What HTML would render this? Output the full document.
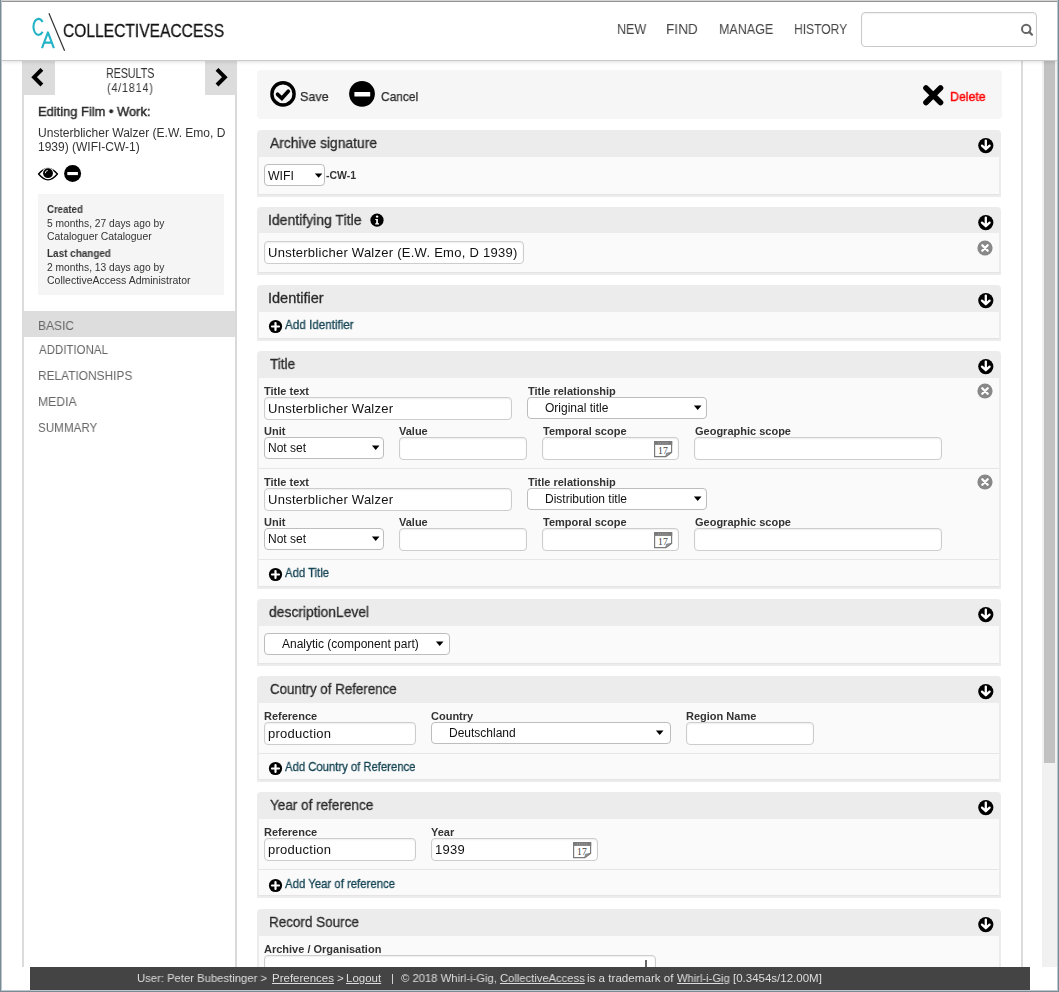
<!DOCTYPE html>
<html><head><meta charset="utf-8">
<style>
*{box-sizing:border-box}
html,body{margin:0;padding:0;width:1059px;height:992px;overflow:hidden;background:#fff;font-family:"Liberation Sans",sans-serif}
.a{position:absolute}
.t{position:absolute;white-space:nowrap;line-height:1;transform-origin:0 0;will-change:transform}
.sec{position:absolute;left:257px;width:744px;background:#ececec;border-radius:4px 4px 0 0}
.sec .bd{position:absolute;left:2px;right:2px;background:#fafafa;border-bottom:1px solid #e4e4e4}
.sh{font-size:14.5px;color:#333;transform:scaleX(.955)}
.st{-webkit-text-stroke:.25px currentColor}
.inp{position:absolute;background:#fff;border:1px solid #cdcdcd;border-radius:4px;box-shadow:inset 0 1px 2px rgba(0,0,0,.07)}
.sel{position:absolute;background:#fff;border:1px solid #bdbdbd;border-radius:4px}
.lbl{position:absolute;font-size:11px;font-weight:bold;color:#333;white-space:nowrap;line-height:1;will-change:transform}
.itx{position:absolute;font-size:13px;color:#111;white-space:nowrap;line-height:1;letter-spacing:.26px;will-change:transform}
.stx{position:absolute;font-size:12px;color:#111;white-space:nowrap;line-height:1;will-change:transform}
.arr{position:absolute;width:0;height:0;border-left:3.5px solid transparent;border-right:3.5px solid transparent;border-top:4.5px solid #000}
.add{position:absolute;font-size:12.6px;color:#21505f;white-space:nowrap;line-height:1;transform-origin:0 0}
.ft{position:absolute;white-space:nowrap;line-height:1;font-size:11.5px;color:#ddd;z-index:9;transform-origin:0 0;will-change:transform}
</style></head><body>
<div class="a" style="left:2px;top:2px;width:1055px;height:58px;background:#fff;z-index:5;box-shadow:0 1px 0 #cbcbcb,0 2px 4px rgba(0,0,0,.13)"></div>
<svg class="a" style="left:0;top:0;z-index:6" width="240" height="60">
 <path d="M42.6 22.0 A5.1 8.0 0 1 0 42.6 31.7" fill="none" stroke="#22b3c7" stroke-width="2.1"/>
 <path d="M42 48.1 L47.95 32.4 L53.9 48.1 M43.9 42.6 L52 42.6" fill="none" stroke="#22b3c7" stroke-width="2.1" stroke-linejoin="round"/>
 <path d="M48.9 13.3 L64.6 50.7" stroke="#333" stroke-width="1.2"/>
</svg>
<div class="t" style="left:62.7px;top:22px;font-size:18.5px;color:#111;transform:scaleX(0.8426);z-index:6;-webkit-text-stroke:.3px #111">COLLECTIVEACCESS</div>
<div class="t" style="left:616.51px;top:22px;font-size:14.5px;color:#444;transform:scaleX(0.8604);z-index:6">NEW</div>
<div class="t" style="left:666.01px;top:22px;font-size:14.5px;color:#444;transform:scaleX(0.9404);z-index:6">FIND</div>
<div class="t" style="left:719.01px;top:22px;font-size:14.5px;color:#444;transform:scaleX(0.8621);z-index:6">MANAGE</div>
<div class="t" style="left:794.2px;top:22px;font-size:14.5px;color:#444;transform:scaleX(0.8322);z-index:6">HISTORY</div>
<div class="a" style="left:861px;top:12px;width:176px;height:35px;border:1px solid #c9c9c9;border-radius:4px;background:#fff;z-index:6;box-shadow:inset 0 1px 2px rgba(0,0,0,.06)"></div>
<svg class="a" style="left:1018px;top:22px;z-index:7" width="16" height="16">
 <circle cx="8.2" cy="6.9" r="4.2" fill="none" stroke="#666" stroke-width="2"/>
 <path d="M11.2 9.9 L14 12.7" stroke="#666" stroke-width="2.2" stroke-linecap="round"/>
</svg>
<div class="a" style="left:1042px;top:60px;width:15px;height:907px;background:#f1f1f1"></div>
<div class="a" style="left:1044px;top:60px;width:11px;height:703px;background:#c1c1c1"></div>
<div class="a" style="left:22px;top:60px;width:2px;height:907px;background:#dcdcdc"></div>
<div class="a" style="left:235px;top:60px;width:2px;height:907px;background:#d9d9d9"></div>
<div class="a" style="left:1021px;top:60px;width:2px;height:907px;background:#dcdcdc"></div>
<div class="a" style="left:22px;top:60px;width:33px;height:35px;background:#dcdcdc"></div>
<svg class="a" style="left:22px;top:60px" width="33" height="35"><path d="M19.9 9.4 L12.1 17.2 L19.9 25" fill="none" stroke="#000" stroke-width="4"/></svg>
<div class="a" style="left:205px;top:60px;width:32px;height:35px;background:#dcdcdc"></div>
<svg class="a" style="left:205px;top:60px" width="32" height="35"><path d="M12 9.4 L19.8 17.2 L12 25" fill="none" stroke="#000" stroke-width="4"/></svg>
<div class="t" style="left:105.88px;top:66.5px;font-size:13.8px;color:#333;transform:scaleX(0.771);">RESULTS</div>
<div class="t" style="left:107.37px;top:82px;font-size:12.5px;color:#333;transform:scaleX(0.855);letter-spacing:1px">(4/1814)</div>
<div class="t" style="left:38.0px;top:104.8px;font-size:13.5px;color:#2a2a2a;transform:scaleX(0.955);-webkit-text-stroke:.45px #2a2a2a">Editing Film • Work:</div>
<div class="t" style="left:37.5px;top:126.5px;font-size:12px;color:#333;transform:scaleX(1.0027);">Unsterblicher Walzer (E.W. Emo, D</div>
<div class="t" style="left:37.5px;top:140.5px;font-size:12px;color:#333;transform:scaleX(1.0);">1939) (WIFI-CW-1)</div>
<svg class="a" style="left:36px;top:163px" width="50" height="22">
 <path d="M2.6 11.1 Q12 0.1 21.4 11.1 Q12 22.4 2.6 11.1 Z" fill="none" stroke="#000" stroke-width="1.5" stroke-linejoin="round"/>
 <circle cx="12" cy="10.4" r="5.9" fill="#fff"/>
 <circle cx="12" cy="10.2" r="4.9" fill="#000"/>
 <path d="M9.3 10.2 A2.7 2.7 0 0 1 11.8 7.5" fill="none" stroke="#fff" stroke-width="0.9"/>
 <circle cx="36.6" cy="10.5" r="8.5" fill="#000"/>
 <rect x="31.3" y="9" width="10.6" height="3.1" fill="#fff"/>
</svg>
<div class="a" style="left:38px;top:194px;width:186px;height:101px;background:#f5f5f5"></div>
<div class="t" style="left:46.99px;top:205.3px;font-size:10px;color:#333;transform:scaleX(0.9603);font-weight:bold">Created</div>
<div class="t" style="left:47.0px;top:218.6px;font-size:10px;color:#333;transform:scaleX(1.0244);">5 months, 27 days ago by</div>
<div class="t" style="left:47.0px;top:231.6px;font-size:10px;color:#333;transform:scaleX(1.04);">Cataloguer Cataloguer</div>
<div class="t" style="left:47.0px;top:249.3px;font-size:10px;color:#333;transform:scaleX(0.9911);font-weight:bold">Last changed</div>
<div class="t" style="left:47.0px;top:262.6px;font-size:10px;color:#333;transform:scaleX(1.0244);">2 months, 13 days ago by</div>
<div class="t" style="left:47.0px;top:275.6px;font-size:10px;color:#333;transform:scaleX(1.05);">CollectiveAccess Administrator</div>
<div class="a" style="left:24px;top:311px;width:211px;height:26px;background:#dddddd"></div>
<div class="t" style="left:37.91px;top:319px;font-size:13px;color:#666;transform:scaleX(0.9244);">BASIC</div>
<div class="t" style="left:39.01px;top:343.3px;font-size:13px;color:#666;transform:scaleX(0.8837);">ADDITIONAL</div>
<div class="t" style="left:37.98px;top:369px;font-size:13px;color:#666;transform:scaleX(0.9149);">RELATIONSHIPS</div>
<div class="t" style="left:37.94px;top:395px;font-size:13px;color:#666;transform:scaleX(0.9378);">MEDIA</div>
<div class="t" style="left:37.97px;top:420.8px;font-size:13px;color:#666;transform:scaleX(0.8954);">SUMMARY</div>
<div class="a" style="left:257px;top:70px;width:745px;height:49px;background:#f6f6f6;border-radius:4px"></div>
<svg class="a" style="left:268px;top:79px" width="120" height="30"><circle cx="15" cy="14.9" r="11.1" fill="none" stroke="#000" stroke-width="3.4"/><path d="M9.6 15.3 L13.9 19.3 L20.3 12.3" fill="none" stroke="#000" stroke-width="3.7" stroke-linecap="round" stroke-linejoin="miter"/><circle cx="94" cy="14.85" r="12.9" fill="#000"/><rect x="86.4" y="13.1" width="15.8" height="4.5" fill="#fff" rx="0.5"/></svg>
<div class="t" style="left:299.96px;top:89.5px;font-size:13px;color:#2a2a2a;transform:scaleX(0.9633);-webkit-text-stroke:.25px #2a2a2a">Save</div>
<div class="t" style="left:380.53px;top:89.5px;font-size:13px;color:#2a2a2a;transform:scaleX(0.9205);-webkit-text-stroke:.25px #2a2a2a">Cancel</div>
<svg class="a" style="left:920px;top:82px" width="27" height="27"><path d="M6 6 L20.5 20.5 M20.5 6 L6 20.5" stroke="#000" stroke-width="5.6" stroke-linecap="round"/></svg>
<div class="t" style="left:950.3px;top:89.5px;font-size:13px;color:#ff0000;transform:scaleX(0.95);-webkit-text-stroke:.4px #ff0000">Delete</div>
<div class="sec" style="top:130px;height:67px"><div class="bd" style="top:27px;bottom:2px"></div></div>
<div class="t" style="left:269.5px;top:135.5px;font-size:14.5px;color:#2a2a2a;transform:scaleX(0.955);-webkit-text-stroke:.3px #2a2a2a">Archive signature</div>
<svg class="a" style="left:977px;top:137px" width="18" height="18"><circle cx="8.8" cy="8.6" r="7.6" fill="#000"/><path d="M8.8 3.6 V11.5 M5 8.6 L8.8 12.2 L12.6 8.6" fill="none" stroke="#fff" stroke-width="2.3" stroke-linecap="round" stroke-linejoin="round"/></svg>
<div class="sel" style="left:264px;top:164px;width:61px;height:22px"></div>
<div class="stx" style="left:268px;top:169.8px;font-size:12.3px">WIFI</div>
<svg class="a" style="left:314px;top:172.5px" width="10" height="7"><path d="M0.9 0.6 H8.3 L4.6 4.8 Z" fill="#000"/></svg>
<div class="t" style="left:325.8px;top:170px;font-size:10.5px;color:#333;transform:scaleX(1);font-weight:bold">-CW-1</div>
<div class="sec" style="top:207px;height:68px"><div class="bd" style="top:26px;bottom:2px"></div></div>
<div class="t" style="left:268.48px;top:212.5px;font-size:14.5px;color:#2a2a2a;transform:scaleX(0.9656);-webkit-text-stroke:.3px #2a2a2a">Identifying Title</div>
<svg class="a" style="left:977px;top:214px" width="18" height="18"><circle cx="8.8" cy="8.6" r="7.6" fill="#000"/><path d="M8.8 3.6 V11.5 M5 8.6 L8.8 12.2 L12.6 8.6" fill="none" stroke="#fff" stroke-width="2.3" stroke-linecap="round" stroke-linejoin="round"/></svg>
<svg class="a" style="left:370px;top:213px" width="14" height="14"><circle cx="7" cy="7.2" r="6.6" fill="#000"/><circle cx="7.1" cy="3.6" r="1.2" fill="#fff"/><path d="M5.3 6 H7.9 V10.3 H9 V11.4 H5.2 V10.3 H6.2 V7 H5.3 Z" fill="#fff"/></svg>
<div class="inp" style="left:264px;top:241px;width:260px;height:23px"></div>
<div class="itx" style="left:268px;top:246px">Unsterblicher Walzer (E.W. Emo, D 1939)</div>
<svg class="a" style="left:977px;top:240px" width="16" height="16"><circle cx="8" cy="8" r="7.6" fill="#888"/><path d="M5.3 5.3 L10.7 10.7 M10.7 5.3 L5.3 10.7" stroke="#fff" stroke-width="2.3" stroke-linecap="round"/></svg>
<div class="sec" style="top:285px;height:56px"><div class="bd" style="top:27px;bottom:2px"></div></div>
<div class="t" style="left:268.45px;top:290.5px;font-size:14.5px;color:#2a2a2a;transform:scaleX(1.001);-webkit-text-stroke:.3px #2a2a2a">Identifier</div>
<svg class="a" style="left:977px;top:292px" width="18" height="18"><circle cx="8.8" cy="8.6" r="7.6" fill="#000"/><path d="M8.8 3.6 V11.5 M5 8.6 L8.8 12.2 L12.6 8.6" fill="none" stroke="#fff" stroke-width="2.3" stroke-linecap="round" stroke-linejoin="round"/></svg>
<svg class="a" style="left:268px;top:319.4px" width="15" height="15"><circle cx="7.5" cy="7.5" r="6.6" fill="#000"/><path d="M7.5 4 V11 M4 7.5 H11" stroke="#fff" stroke-width="2.2" stroke-linecap="round"/></svg>
<div class="t" style="left:285.1px;top:319.09999999999997px;font-size:12.6px;color:#154454;transform:scaleX(0.9246);-webkit-text-stroke:.3px #154454">Add Identifier</div>
<div class="sec" style="top:351px;height:238px"><div class="bd" style="top:26.5px;bottom:2px"></div></div>
<div class="t" style="left:269.51px;top:356.5px;font-size:14.5px;color:#2a2a2a;transform:scaleX(0.9372);-webkit-text-stroke:.3px #2a2a2a">Title</div>
<svg class="a" style="left:977px;top:358px" width="18" height="18"><circle cx="8.8" cy="8.6" r="7.6" fill="#000"/><path d="M8.8 3.6 V11.5 M5 8.6 L8.8 12.2 L12.6 8.6" fill="none" stroke="#fff" stroke-width="2.3" stroke-linecap="round" stroke-linejoin="round"/></svg>
<div class="lbl" style="left:264px;top:386px">Title text</div>
<div class="inp" style="left:264px;top:397px;width:248px;height:23px"></div>
<div class="itx" style="left:268px;top:402px">Unsterblicher Walzer</div>
<div class="lbl" style="left:527.5px;top:386px">Title relationship</div>
<div class="sel" style="left:527px;top:397px;width:180px;height:22px"></div>
<div class="stx" style="left:544.5px;top:402px;font-size:12px">Original title</div>
<svg class="a" style="left:692.5px;top:405px" width="10" height="7"><path d="M0.9 0.6 H8.5 L4.7 5 Z" fill="#000"/></svg>
<svg class="a" style="left:977px;top:383.4px" width="16" height="16"><circle cx="8" cy="8" r="7.6" fill="#888"/><path d="M5.3 5.3 L10.7 10.7 M10.7 5.3 L5.3 10.7" stroke="#fff" stroke-width="2.3" stroke-linecap="round"/></svg>
<div class="lbl" style="left:264px;top:426px">Unit</div>
<div class="sel" style="left:264px;top:437px;width:120px;height:22px"></div>
<div class="stx" style="left:267.5px;top:442px;font-size:12px">Not set</div>
<svg class="a" style="left:371.4px;top:445px" width="10" height="7"><path d="M0.9 0.6 H8.5 L4.7 5 Z" fill="#000"/></svg>
<div class="lbl" style="left:399px;top:426px">Value</div>
<div class="inp" style="left:399px;top:437px;width:128px;height:23px"></div>
<div class="lbl" style="left:542.5px;top:426px">Temporal scope</div>
<div class="inp" style="left:542px;top:437px;width:137px;height:23px"></div>
<svg class="a" style="left:654px;top:441px" width="19" height="17"><path d="M0.6 0.6 H17.6 V11.4 L11.8 15.6 H0.6 Z" fill="#fff" stroke="#7a7a7a" stroke-width="1.2"/><rect x="0" y="0" width="18.2" height="3.9" fill="#7a7a7a"/><path d="M4 2 H14.5" stroke="#bbb" stroke-width="0.8" stroke-dasharray="1 1.2"/><path d="M11.8 15.6 L12.6 12.2 L17.6 11.4 Z" fill="#9a9a9a" stroke="#7a7a7a" stroke-width="0.9"/><text x="4.1" y="12.9" font-family="Liberation Serif" font-size="9.6" fill="#444">17</text></svg>
<div class="lbl" style="left:694.5px;top:426px">Geographic scope</div>
<div class="inp" style="left:694px;top:437px;width:248px;height:23px"></div>
<div class="a" style="left:259px;top:468px;width:740px;height:1px;background:#e6e6e6"></div>
<div class="lbl" style="left:264px;top:477px">Title text</div>
<div class="inp" style="left:264px;top:488px;width:248px;height:23px"></div>
<div class="itx" style="left:268px;top:493px">Unsterblicher Walzer</div>
<div class="lbl" style="left:527.5px;top:477px">Title relationship</div>
<div class="sel" style="left:527px;top:488px;width:180px;height:22px"></div>
<div class="stx" style="left:544.5px;top:493px;font-size:12px">Distribution title</div>
<svg class="a" style="left:692.5px;top:496px" width="10" height="7"><path d="M0.9 0.6 H8.5 L4.7 5 Z" fill="#000"/></svg>
<svg class="a" style="left:977px;top:474.4px" width="16" height="16"><circle cx="8" cy="8" r="7.6" fill="#888"/><path d="M5.3 5.3 L10.7 10.7 M10.7 5.3 L5.3 10.7" stroke="#fff" stroke-width="2.3" stroke-linecap="round"/></svg>
<div class="lbl" style="left:264px;top:517px">Unit</div>
<div class="sel" style="left:264px;top:528px;width:120px;height:22px"></div>
<div class="stx" style="left:267.5px;top:533px;font-size:12px">Not set</div>
<svg class="a" style="left:371.4px;top:536px" width="10" height="7"><path d="M0.9 0.6 H8.5 L4.7 5 Z" fill="#000"/></svg>
<div class="lbl" style="left:399px;top:517px">Value</div>
<div class="inp" style="left:399px;top:528px;width:128px;height:23px"></div>
<div class="lbl" style="left:542.5px;top:517px">Temporal scope</div>
<div class="inp" style="left:542px;top:528px;width:137px;height:23px"></div>
<svg class="a" style="left:654px;top:532px" width="19" height="17"><path d="M0.6 0.6 H17.6 V11.4 L11.8 15.6 H0.6 Z" fill="#fff" stroke="#7a7a7a" stroke-width="1.2"/><rect x="0" y="0" width="18.2" height="3.9" fill="#7a7a7a"/><path d="M4 2 H14.5" stroke="#bbb" stroke-width="0.8" stroke-dasharray="1 1.2"/><path d="M11.8 15.6 L12.6 12.2 L17.6 11.4 Z" fill="#9a9a9a" stroke="#7a7a7a" stroke-width="0.9"/><text x="4.1" y="12.9" font-family="Liberation Serif" font-size="9.6" fill="#444">17</text></svg>
<div class="lbl" style="left:694.5px;top:517px">Geographic scope</div>
<div class="inp" style="left:694px;top:528px;width:248px;height:23px"></div>
<div class="a" style="left:259px;top:559px;width:740px;height:1px;background:#e6e6e6"></div>
<svg class="a" style="left:268px;top:567.4px" width="15" height="15"><circle cx="7.5" cy="7.5" r="6.6" fill="#000"/><path d="M7.5 4 V11 M4 7.5 H11" stroke="#fff" stroke-width="2.2" stroke-linecap="round"/></svg>
<div class="t" style="left:285.09px;top:567.1px;font-size:12.6px;color:#154454;transform:scaleX(0.8979);-webkit-text-stroke:.3px #154454">Add Title</div>
<div class="sec" style="top:599px;height:67px"><div class="bd" style="top:26.5px;bottom:2px"></div></div>
<div class="t" style="left:269.49px;top:604.5px;font-size:14.5px;color:#2a2a2a;transform:scaleX(0.9551);-webkit-text-stroke:.3px #2a2a2a">descriptionLevel</div>
<svg class="a" style="left:977px;top:606px" width="18" height="18"><circle cx="8.8" cy="8.6" r="7.6" fill="#000"/><path d="M8.8 3.6 V11.5 M5 8.6 L8.8 12.2 L12.6 8.6" fill="none" stroke="#fff" stroke-width="2.3" stroke-linecap="round" stroke-linejoin="round"/></svg>
<div class="sel" style="left:264px;top:633px;width:186px;height:22px"></div>
<div class="stx" style="left:281.5px;top:638px;font-size:12px">Analytic (component part)</div>
<svg class="a" style="left:435.4px;top:641px" width="10" height="7"><path d="M0.9 0.6 H8.5 L4.7 5 Z" fill="#000"/></svg>
<div class="sec" style="top:676px;height:106px"><div class="bd" style="top:27px;bottom:2px"></div></div>
<div class="t" style="left:269.5px;top:681.5px;font-size:14.5px;color:#2a2a2a;transform:scaleX(0.9186);-webkit-text-stroke:.3px #2a2a2a">Country of Reference</div>
<svg class="a" style="left:977px;top:683px" width="18" height="18"><circle cx="8.8" cy="8.6" r="7.6" fill="#000"/><path d="M8.8 3.6 V11.5 M5 8.6 L8.8 12.2 L12.6 8.6" fill="none" stroke="#fff" stroke-width="2.3" stroke-linecap="round" stroke-linejoin="round"/></svg>
<div class="lbl" style="left:264px;top:711px">Reference</div>
<div class="inp" style="left:264px;top:722px;width:152px;height:23px"></div>
<div class="itx" style="left:268px;top:727px">production</div>
<div class="lbl" style="left:431px;top:711px">Country</div>
<div class="sel" style="left:431px;top:722px;width:240px;height:22px"></div>
<div class="stx" style="left:449px;top:727px;font-size:12px">Deutschland</div>
<svg class="a" style="left:655px;top:730px" width="10" height="7"><path d="M0.9 0.6 H8.5 L4.7 5 Z" fill="#000"/></svg>
<div class="lbl" style="left:686px;top:711px">Region Name</div>
<div class="inp" style="left:686px;top:722px;width:128px;height:23px"></div>
<div class="a" style="left:259px;top:753px;width:740px;height:1px;background:#e6e6e6"></div>
<svg class="a" style="left:268px;top:761.3px" width="15" height="15"><circle cx="7.5" cy="7.5" r="6.6" fill="#000"/><path d="M7.5 4 V11 M4 7.5 H11" stroke="#fff" stroke-width="2.2" stroke-linecap="round"/></svg>
<div class="t" style="left:285.11px;top:761.0px;font-size:12.6px;color:#154454;transform:scaleX(0.8963);-webkit-text-stroke:.3px #154454">Add Country of Reference</div>
<div class="sec" style="top:792px;height:106px"><div class="bd" style="top:27px;bottom:2px"></div></div>
<div class="t" style="left:269.51px;top:797.5px;font-size:14.5px;color:#2a2a2a;transform:scaleX(0.9323);-webkit-text-stroke:.3px #2a2a2a">Year of reference</div>
<svg class="a" style="left:977px;top:799px" width="18" height="18"><circle cx="8.8" cy="8.6" r="7.6" fill="#000"/><path d="M8.8 3.6 V11.5 M5 8.6 L8.8 12.2 L12.6 8.6" fill="none" stroke="#fff" stroke-width="2.3" stroke-linecap="round" stroke-linejoin="round"/></svg>
<div class="lbl" style="left:264px;top:827px">Reference</div>
<div class="inp" style="left:264px;top:838px;width:152px;height:23px"></div>
<div class="itx" style="left:268px;top:843px">production</div>
<div class="lbl" style="left:431px;top:827px">Year</div>
<div class="inp" style="left:431px;top:838px;width:167px;height:23px"></div>
<div class="itx" style="left:435px;top:843px">1939</div>
<svg class="a" style="left:573px;top:842px" width="19" height="17"><path d="M0.6 0.6 H17.6 V11.4 L11.8 15.6 H0.6 Z" fill="#fff" stroke="#7a7a7a" stroke-width="1.2"/><rect x="0" y="0" width="18.2" height="3.9" fill="#7a7a7a"/><path d="M4 2 H14.5" stroke="#bbb" stroke-width="0.8" stroke-dasharray="1 1.2"/><path d="M11.8 15.6 L12.6 12.2 L17.6 11.4 Z" fill="#9a9a9a" stroke="#7a7a7a" stroke-width="0.9"/><text x="4.1" y="12.9" font-family="Liberation Serif" font-size="9.6" fill="#444">17</text></svg>
<div class="a" style="left:259px;top:869px;width:740px;height:1px;background:#e6e6e6"></div>
<svg class="a" style="left:268px;top:878px" width="15" height="15"><circle cx="7.5" cy="7.5" r="6.6" fill="#000"/><path d="M7.5 4 V11 M4 7.5 H11" stroke="#fff" stroke-width="2.2" stroke-linecap="round"/></svg>
<div class="t" style="left:285.09px;top:877.7px;font-size:12.6px;color:#154454;transform:scaleX(0.9034);-webkit-text-stroke:.3px #154454">Add Year of reference</div>
<div class="sec" style="top:909px;height:120px"><div class="bd" style="top:27px;bottom:2px"></div></div>
<div class="t" style="left:268.53px;top:914.5px;font-size:14.5px;color:#2a2a2a;transform:scaleX(0.9288);-webkit-text-stroke:.3px #2a2a2a">Record Source</div>
<svg class="a" style="left:977px;top:916px" width="18" height="18"><circle cx="8.8" cy="8.6" r="7.6" fill="#000"/><path d="M8.8 3.6 V11.5 M5 8.6 L8.8 12.2 L12.6 8.6" fill="none" stroke="#fff" stroke-width="2.3" stroke-linecap="round" stroke-linejoin="round"/></svg>
<div class="lbl" style="left:264px;top:944px">Archive / Organisation</div>
<div class="inp" style="left:264px;top:955px;width:392px;height:30px"></div>
<div class="a" style="left:645px;top:960px;width:2px;height:8px;background:#666"></div>
<div class="a" style="left:30px;top:967px;width:1000px;height:23px;background:#444;z-index:8"></div>
<div class="ft" style="left:137px;top:972.8px;transform:scaleX(0.98)">User: Peter Bubestinger &gt;</div>
<div class="ft" style="left:272px;top:972.8px;transform:scaleX(1.0)"><u>Preferences</u></div>
<div class="ft" style="left:336.8px;top:972.8px;transform:scaleX(1.0)">&gt;</div>
<div class="ft" style="left:346.3px;top:972.8px;transform:scaleX(1.0)"><u>Logout</u></div>
<div class="ft" style="left:390.5px;top:972.8px;transform:scaleX(1.0)">|</div>
<div class="ft" style="left:400.5px;top:972.8px;transform:scaleX(0.98)">© 2018 Whirl-i-Gig,</div>
<div class="ft" style="left:499.5px;top:972.8px;transform:scaleX(0.975)"><u>CollectiveAccess</u></div>
<div class="ft" style="left:587px;top:972.8px;transform:scaleX(1.01)">is a trademark of</div>
<div class="ft" style="left:677px;top:972.8px;transform:scaleX(0.97)"><u>Whirl-i-Gig</u></div>
<div class="ft" style="left:733px;top:972.8px;transform:scaleX(1.0)">[0.3454s/12.00M]</div>
<div class="a" style="left:0;top:0;width:1059px;height:1px;background:#d4d4d4;z-index:20"></div>
<div class="a" style="left:0;top:1px;width:1059px;height:1px;background:#939393;z-index:20"></div>
<div class="a" style="left:0;top:990px;width:1059px;height:1px;background:#b8c6ce;z-index:20"></div>
<div class="a" style="left:0;top:991px;width:1059px;height:1px;background:#7b8a93;z-index:20"></div>
<div class="a" style="left:0;top:0;width:1px;height:992px;background:#7b8a93;z-index:21"></div>
<div class="a" style="left:1px;top:0;width:1px;height:991px;background:#b8c6ce;z-index:21"></div>
<div class="a" style="left:1057px;top:0;width:1px;height:991px;background:#b8c6ce;z-index:21"></div>
<div class="a" style="left:1058px;top:0;width:1px;height:992px;background:#7b8a93;z-index:21"></div>
</body></html>
